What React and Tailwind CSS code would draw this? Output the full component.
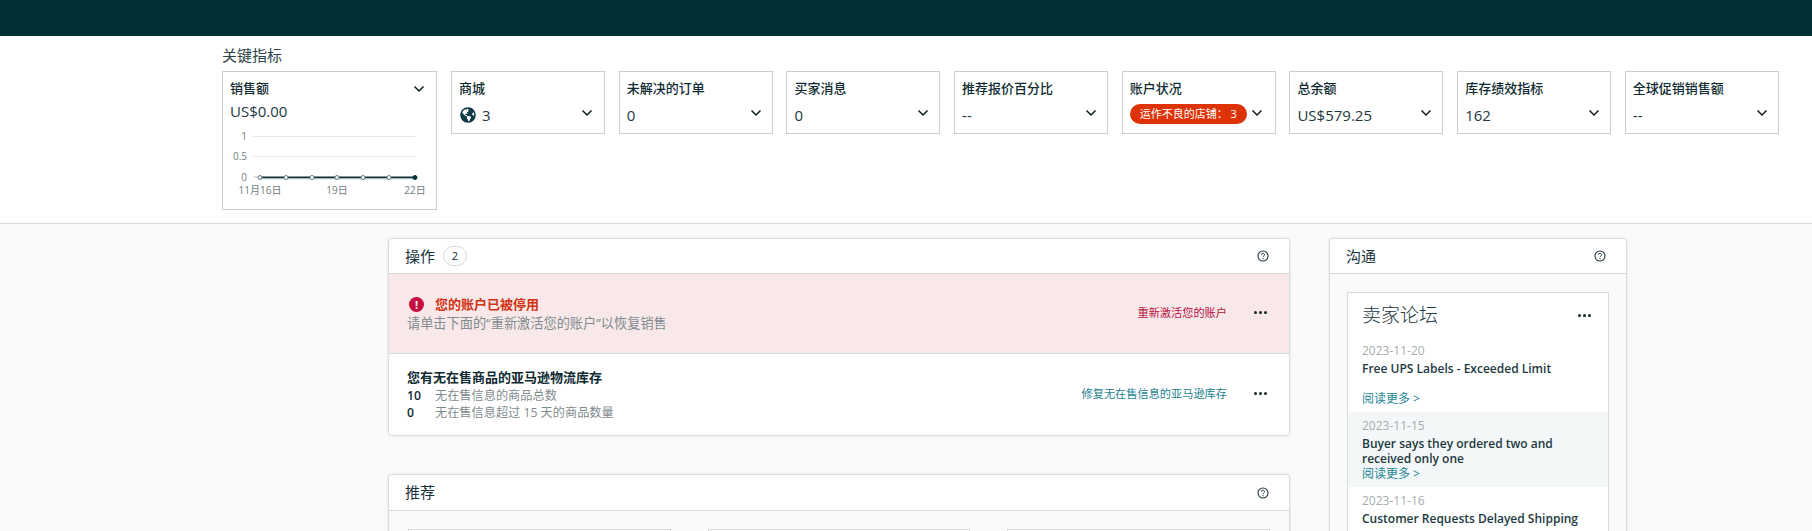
import React from 'react';
import { FaGlobeAmericas } from 'react-icons/fa';

const metrics = [
  { title: '未解决的订单', value: '0' },
  { title: '买家消息', value: '0' },
  { title: '推荐报价百分比', value: '--' },
  { title: '账户状况', pill: '运作不良的店铺： 3' },
  { title: '总余额', value: 'US$579.25' },
  { title: '库存绩效指标', value: '162' },
  { title: '全球促销销售额', value: '--' },
];

// the third post's link sits below the fold, so it isn't rendered
const posts = [
  { date: '2023-11-20', title: 'Free UPS Labels - Exceeded Limit', tall: true, link: true },
  { date: '2023-11-15', title: 'Buyer says they ordered two and received only one', shaded: true, link: true },
  { date: '2023-11-16', title: 'Customer Requests Delayed Shipping' },
];

const Chevron = ({ className = '' }) => (
  <svg className={className} width="12" height="8" viewBox="0 0 12 8" fill="none">
    <path d="M1.5 1.5 6 6l4.5-4.5" stroke="#0f1b1f" strokeWidth="1.5" />
  </svg>
);

const Help = () => (
  <svg width="12" height="12" viewBox="0 0 12 12" fill="none">
    <circle cx="6" cy="6" r="5" stroke="#22393f" strokeWidth="1.1" />
    <path d="M4.4 4.7C4.5 3.8 5.1 3.3 6 3.3c.9 0 1.6.6 1.6 1.4 0 1.2-1.6 1.2-1.6 2.4" stroke="#22393f" strokeWidth="1" />
    <circle cx="6" cy="8.7" r=".65" fill="#22393f" />
  </svg>
);

const Dots = () => (
  <div className="flex gap-[2px]">
    <span className="w-[3px] h-[3px] rounded-full bg-[#16262b]" />
    <span className="w-[3px] h-[3px] rounded-full bg-[#16262b]" />
    <span className="w-[3px] h-[3px] rounded-full bg-[#16262b]" />
  </div>
);

const Chart = () => {
  const xs = [260, 286, 312, 337, 363, 389, 415];
  return (
    <svg className="block mt-[8px]" width="213" height="78" viewBox="223 130 213 78" fontFamily="'Open Sans', 'Noto Sans CJK SC', sans-serif" fontSize="10" fill="#6f7c80">
      <line x1="253" x2="415" y1="137.5" y2="137.5" stroke="#e4e7e7" />
      <line x1="253" x2="415" y1="157.5" y2="157.5" stroke="#e4e7e7" />
      <line x1="253" x2="260" y1="178" y2="178" stroke="#c4cbcc" />
      <line x1="260" x2="415" y1="178.5" y2="178.5" stroke="#12313a" strokeWidth="2" />
      <line x1="260" x2="415" y1="180" y2="180" stroke="#c7dfe3" />
      {xs.map((x, i) => (
        <circle key={x} cx={x} cy="178.5" r="2" fill={i === 6 ? '#002f36' : '#fff'} stroke={i === 6 ? '#002f36' : '#5d7c82'} strokeWidth="1" />
      ))}
      <text x="247" y="141" textAnchor="end">1</text>
      <text x="247" y="161" textAnchor="end">0.5</text>
      <text x="247" y="182" textAnchor="end">0</text>
      <text x="260" y="195" textAnchor="middle">11月16日</text>
      <text x="337" y="195" textAnchor="middle">19日</text>
      <text x="415" y="195" textAnchor="middle">22日</text>
    </svg>
  );
};

const Panel = ({ title, badge, headerHeight = 'h-[35px]', children }) => (
  <div className="bg-white rounded-[3px] shadow-[0_0_3px_rgba(0,30,40,0.35)] overflow-hidden">
    <div className={`${headerHeight} flex items-center justify-between pl-[16px] pr-[20px] border-b border-[#d5dbdb]`}>
      <div className="flex items-center gap-[8px]">
        <span className="text-[15px] text-[#16333a]">{title}</span>
        {badge && (
          <span className="w-[24px] h-[20px] rounded-full border border-[#d5dbdb] flex items-center justify-center text-[11px] text-[#16262b]">{badge}</span>
        )}
      </div>
      <Help />
    </div>
    {children}
  </div>
);

const MetricCard = ({ title, value, pill }) => (
  <div className="relative w-[154px] h-[63px] shrink-0 border border-[#cccccc] px-[7px] pt-[7px]">
    <div className="text-[13px] leading-[18px] font-medium text-[#0f2b31]">{title}</div>
    {pill ? (
      <span className="mt-[7px] w-[117px] h-[20px] rounded-full bg-[#dd3306] text-white text-[11px] flex items-center justify-center">{pill}</span>
    ) : (
      <div className="mt-[8px] text-[15px] leading-[20px] text-[#22393f]">{value}</div>
    )}
    <Chevron className={`absolute top-[37px] ${pill ? 'right-[12px]' : 'right-[10px]'}`} />
  </div>
);

export default function App() {
  return (
    <div className="h-[531px] overflow-hidden bg-[#fafafa] font-['Open_Sans','Noto_Sans_CJK_SC',sans-serif] text-[#0f2b31]">
      <div className="h-[36px] bg-[#002f36]" />

      <section className="h-[188px] bg-white border-b border-[#d5dbdb] pl-[222px]">
        <div className="pt-[9px] h-[35px] text-[15px] leading-[20px] text-[#2c4349]">关键指标</div>
        <div className="flex items-start">
          <div className="relative w-[215px] h-[139px] shrink-0 border border-[#cccccc] mr-[14px]">
            <div className="px-[7px] pt-[7px] text-[13px] leading-[18px] font-medium">销售额</div>
            <div className="px-[7px] mt-[4px] text-[15px] leading-[20px] text-[#22393f]">US$0.00</div>
            <Chevron className="absolute top-[13px] right-[11px]" />
            <Chart />
          </div>
          <div className="flex gap-[13.7px]">
            <div className="relative w-[154px] h-[63px] shrink-0 border border-[#cccccc] px-[7px] pt-[7px]">
              <div className="text-[13px] leading-[18px] font-medium">商城</div>
              <div className="mt-[8px] pl-px flex items-center gap-[6px] text-[15px] leading-[20px] text-[#22393f]">
                <FaGlobeAmericas className="text-[16px] text-[#0f3b45]" />
                <span>3</span>
              </div>
              <Chevron className="absolute top-[37px] right-[11px]" />
            </div>
            {metrics.map((m) => (
              <MetricCard key={m.title} {...m} />
            ))}
          </div>
        </div>
      </section>

      <main className="flex items-start pl-[389px] pt-[15px]">
        <div className="w-[900px] flex flex-col gap-[40px]">
          <Panel title="操作" badge="2">
            <div className="h-[80px] bg-[#f9e8e9] border-b border-[#d5dbdb] flex items-center justify-between pl-[18px] pr-[22px]">
              <div className="mt-[1px]">
                <div className="flex items-center gap-[11px] pl-[2px]">
                  <span className="w-[15px] h-[15px] rounded-full bg-[#c7103f] text-white text-[11px] font-bold leading-none flex items-center justify-center">!</span>
                  <span className="text-[13px] leading-[18px] font-bold text-[#d13212]">您的账户已被停用</span>
                </div>
                <div className="text-[13.2px] leading-[20px] text-[#7f8c8f]">请单击下面的“重新激活您的账户”以恢复销售</div>
              </div>
              <div className="flex items-center gap-[27px] mt-[-1px]">
                <span className="text-[11.2px] text-[#b7103f]">重新激活您的账户</span>
                <Dots />
              </div>
            </div>
            <div className="h-[81px] flex items-center justify-between pl-[18px] pr-[22px]">
              <div className="text-[12.2px] leading-[17px]">
                <div className="text-[13px] font-bold text-[#0f2b31] mb-px">您有无在售商品的亚马逊物流库存</div>
                <div className="flex"><span className="w-[28px] font-semibold">10</span><span className="text-[#7f8c8f]">无在售信息的商品总数</span></div>
                <div className="flex"><span className="w-[28px] font-semibold">0</span><span className="text-[#7f8c8f]">无在售信息超过 15 天的商品数量</span></div>
              </div>
              <div className="flex items-center gap-[27px] mt-[-1px]">
                <span className="text-[11.2px] text-[#1c7f8f]">修复无在售信息的亚马逊库存</span>
                <Dots />
              </div>
            </div>
          </Panel>

          <Panel title="推荐" headerHeight="h-[36px]">
            <div className="bg-[#fafafa] grid grid-cols-3 gap-[37px] pt-[18px] px-[19px] h-[200px]">
              <div className="border border-[#d5dbdb] bg-white h-[180px]" />
              <div className="border border-[#d5dbdb] bg-white h-[180px]" />
              <div className="border border-[#d5dbdb] bg-white h-[180px]" />
            </div>
          </Panel>
        </div>

        <div className="w-[296px] ml-[41px]">
          <Panel title="沟通">
            <div className="bg-[#fafafa] pt-[18px] px-[17px] h-[300px]">
              <div className="bg-white border border-[#d5dbdb] h-[300px]">
                <div className="h-[44px] flex items-center justify-between pl-[14px] pr-[17px]">
                  <span className="text-[19px] font-light text-[#22393f]">卖家论坛</span>
                  <Dots />
                </div>
                {posts.map((p) => (
                  <div key={p.date} className={`h-[75px] pl-[14px] pr-[18px] pt-[6px] text-[12px] ${p.shaded ? 'bg-[#f3f7f8]' : ''}`}>
                    <div className="leading-[16px] text-[#a5adae]">{p.date}</div>
                    <div className="mt-[2px] leading-[15px] font-semibold text-[#22393f]">{p.title}</div>
                    {p.link && <div className={`${p.tall ? 'mt-[15px]' : ''} leading-[15px] text-[#1c8796]`}>阅读更多 &gt;</div>}
                  </div>
                ))}
              </div>
            </div>
          </Panel>
        </div>
      </main>
    </div>
  );
}
